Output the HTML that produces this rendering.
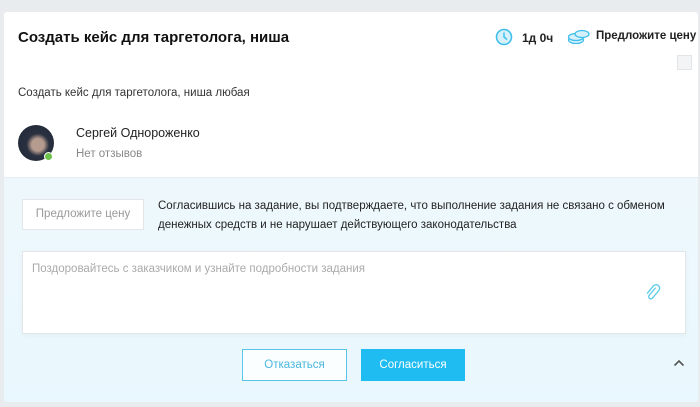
<!DOCTYPE html>
<html><head><meta charset="utf-8"><style>
*{margin:0;padding:0;box-sizing:border-box}
body{width:700px;height:407px;background:#e9ecee;font-family:"Liberation Sans","DejaVu Sans",sans-serif;position:relative;overflow:hidden;color:#222}
.card{position:absolute;left:4px;top:12px;width:694px;height:390px;background:#fff;border-radius:3px;overflow:hidden}
.bot{position:absolute;left:0;top:165px;width:100%;height:225px;background:linear-gradient(#eef8fc,#e9f8fe);border-top:1px solid #e4eef3}
.abs{position:absolute}
h1{position:absolute;left:14px;top:17px;font-size:15px;font-weight:bold;color:#111}
</style></head><body>
<div class="card">
<h1>Создать кейс для таргетолога, ниша</h1>
<svg class="abs" style="left:491px;top:16px" width="18" height="18" viewBox="0 0 18 18"><circle cx="9" cy="9" r="7.5" fill="#d6f1fb" stroke="#3fc0ec" stroke-width="1.6"/><path d="M9 4.5V9l3 2.5" stroke="#3fc0ec" stroke-width="1.5" fill="none"/></svg>
<div class="abs" style="left:518px;top:19px;font-size:12px;font-weight:bold">1д 0ч</div>
<svg class="abs" style="left:563px;top:16px" width="24" height="18" viewBox="0 0 24 18"><ellipse cx="9" cy="12" rx="7.5" ry="3.5" fill="#d6f1fb" stroke="#3fc0ec" stroke-width="1.3"/><ellipse cx="9" cy="9" rx="7.5" ry="3.5" fill="#d6f1fb" stroke="#3fc0ec" stroke-width="1.3"/><ellipse cx="15" cy="6" rx="7" ry="3.5" fill="#d6f1fb" stroke="#3fc0ec" stroke-width="1.3"/></svg>
<div class="abs" style="left:592px;top:18px;font-size:11.5px;font-weight:bold">Предложите цену</div>
<div class="abs" style="left:673px;top:43px;width:15px;height:15px;background:#f3f4f5;border:1px solid #e2e4e6"></div>
<div class="abs" style="left:14px;top:75px;font-size:11.5px;color:#333">Создать кейс для таргетолога, ниша любая</div>
<div class="abs" style="left:14px;top:113px;width:36px;height:36px;border-radius:50%;background:radial-gradient(circle at 55% 55%,#b59a8e 0 22%,#2a3140 40%,#1d2433)"></div>
<div class="abs" style="left:40px;top:140px;width:9px;height:9px;border-radius:50%;background:#6cc24a;border:1px solid #fff"></div>
<div class="abs" style="left:72px;top:114px;font-size:12.5px;color:#222">Сергей Однороженко</div>
<div class="abs" style="left:72px;top:136px;font-size:11.5px;color:#888">Нет отзывов</div>
<div class="bot">
<div class="abs" style="left:18px;top:21px;width:122px;height:31px;background:#fff;border:1px solid #e3e6e8;font-size:11.5px;color:#999;text-align:center;line-height:29px">Предложите цену</div>
<div class="abs" style="left:154px;top:19px;width:530px;font-size:11.5px;line-height:19px;color:#222">Согласившись на задание, вы подтверждаете, что выполнение задания не связано с обменом денежных средств и не нарушает действующего законодательства</div>
<div class="abs" style="left:18px;top:73px;width:664px;height:83px;background:#fff;border:1px solid #e3e6e8;box-shadow:0 2px 6px rgba(0,0,0,.04)"><div style="position:absolute;left:9px;top:11px;font-size:11.5px;color:#aaa">Поздоровайтесь с заказчиком и узнайте подробности задания</div>
<svg style="position:absolute;left:621px;top:32px" width="18" height="18" viewBox="0 0 18 18"><path d="M12 4 5 11a2 2 0 0 0 3 3l7-7a3.5 3.5 0 0 0-5-5L3 9" stroke="#5ccbe8" stroke-width="1.3" fill="none" transform="rotate(-5 9 9)"/></svg></div>
<div class="abs" style="left:238px;top:171px;width:105px;height:32px;border:1px solid #58c4e7;background:#fafeff;color:#4ab6de;font-size:11.5px;text-align:center;line-height:30px">Отказаться</div>
<div class="abs" style="left:357px;top:171px;width:104px;height:32px;background:#1fbcf1;color:#fff;font-size:11.5px;text-align:center;line-height:32px">Согласиться</div>
<svg class="abs" style="left:669px;top:181px" width="12" height="8" viewBox="0 0 12 8"><path d="M1.5 6.5 6 2l4.5 4.5" stroke="#555" stroke-width="1.6" fill="none"/></svg>
</div>
</div>
</body></html>
